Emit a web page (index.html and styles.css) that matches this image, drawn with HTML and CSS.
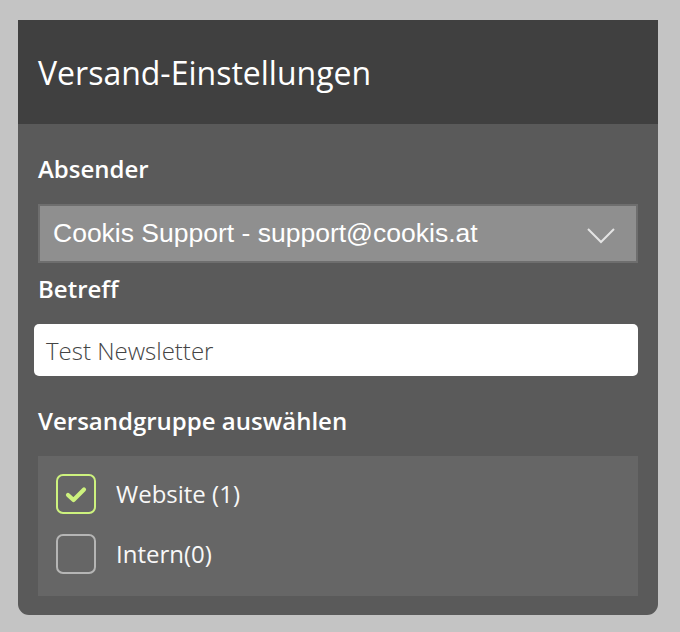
FILE: index.html
```html
<!DOCTYPE html>
<html lang="de">
<head>
<meta charset="utf-8">
<title>Versand-Einstellungen</title>
<link rel="stylesheet" href="styles.css">
</head>
<body>
<div class="card">
  <div class="card-header">
    <h1 class="title">Versand-Einstellungen</h1>
  </div>
  <div class="card-body">
    <label class="field-label label-first">Absender</label>
    <div class="select">
      <span class="select-text">Cookis Support - support@cookis.at</span>
      <svg class="chevron" width="30" height="18" viewBox="0 0 30 18"><path d="M2 3 L15 16 L28 3" fill="none" stroke="#e4e4e4" stroke-width="2"/></svg>
    </div>
    <label class="field-label label-second">Betreff</label>
    <div class="input"><span class="input-text">Test Newsletter</span></div>
    <label class="field-label label-third">Versandgruppe auswählen</label>
    <div class="group">
      <div class="option">
        <span class="box box-checked">
          <svg width="22" height="18" viewBox="0 0 22 18"><path d="M3 9 L8.5 14 L19 3.5" fill="none" stroke="#cdf27e" stroke-width="4.2" stroke-linecap="round" stroke-linejoin="round"/></svg>
        </span>
        <span class="option-text">Website (1)</span>
      </div>
      <div class="option">
        <span class="box"></span>
        <span class="option-text">Intern(0)</span>
      </div>
    </div>
  </div>
</div>
</body>
</html>
```
FILE: styles.css
```css
html, body {
  margin: 0;
  padding: 0;
}
body {
  background: #c4c4c4;
  font-family: "Open Sans", "Noto Sans", sans-serif;
  width: 680px;
  height: 632px;
  overflow: hidden;
}
.card {
  margin: 20px 0 0 18px;
  width: 640px;
  background: #5a5a5a;
  border-radius: 0 0 11px 11px;
  overflow: hidden;
}
.card-header {
  height: 104px;
  background: #404040;
  display: flex;
  align-items: center;
  padding-left: 20px;
}
.title {
  margin: 0;
  font-size: 32px;
  font-weight: 400;
  color: #ffffff;
  line-height: 40px;
  padding-top: 1px;
}
.card-body {
  padding: 31px 20px 19px 20px;
  display: flex;
  flex-direction: column;
}
.field-label {
  font-size: 24px;
  font-weight: 600;
  color: #ffffff;
  line-height: 28px;
  display: block;
}
.label-second {
  margin-top: 12px;
}
.label-third {
  margin-top: 31px;
}
.select {
  margin-top: 21px;
  height: 59px;
  box-sizing: border-box;
  border: 2px solid #6e6e6e;
  background: #8f8f8f;
  display: flex;
  align-items: center;
  justify-content: space-between;
  padding: 0 20px 0 13px;
}
.select-text {
  font-family: "Liberation Sans", Arial, sans-serif;
  font-size: 26.5px;
  color: #ffffff;
}
.chevron {
  display: block;
  margin-top: 2px;
}
.input {
  margin-top: 21px;
  margin-left: -4px;
  width: 604px;
  height: 52px;
  box-sizing: border-box;
  background: #ffffff;
  border-radius: 5px;
  display: flex;
  align-items: center;
  padding-left: 12px;
}
.input-text {
  font-size: 24px;
  font-weight: 300;
  color: #444444;
}
.group {
  margin-top: 21px;
  background: #666666;
  padding: 18px 18px 22px 18px;
  display: flex;
  flex-direction: column;
  gap: 20px;
}
.option {
  display: flex;
  align-items: center;
  gap: 20px;
}
.box {
  width: 40px;
  height: 40px;
  box-sizing: border-box;
  border: 2px solid #b5b5b5;
  border-radius: 7px;
  display: flex;
  align-items: center;
  justify-content: center;
}
.box-checked {
  border-color: #cdf27e;
}
.box-checked svg {
  display: block;
  margin-top: 1px;
}
.option-text {
  font-size: 24px;
  color: #f8f8f8;
  line-height: 30px;
}
```
